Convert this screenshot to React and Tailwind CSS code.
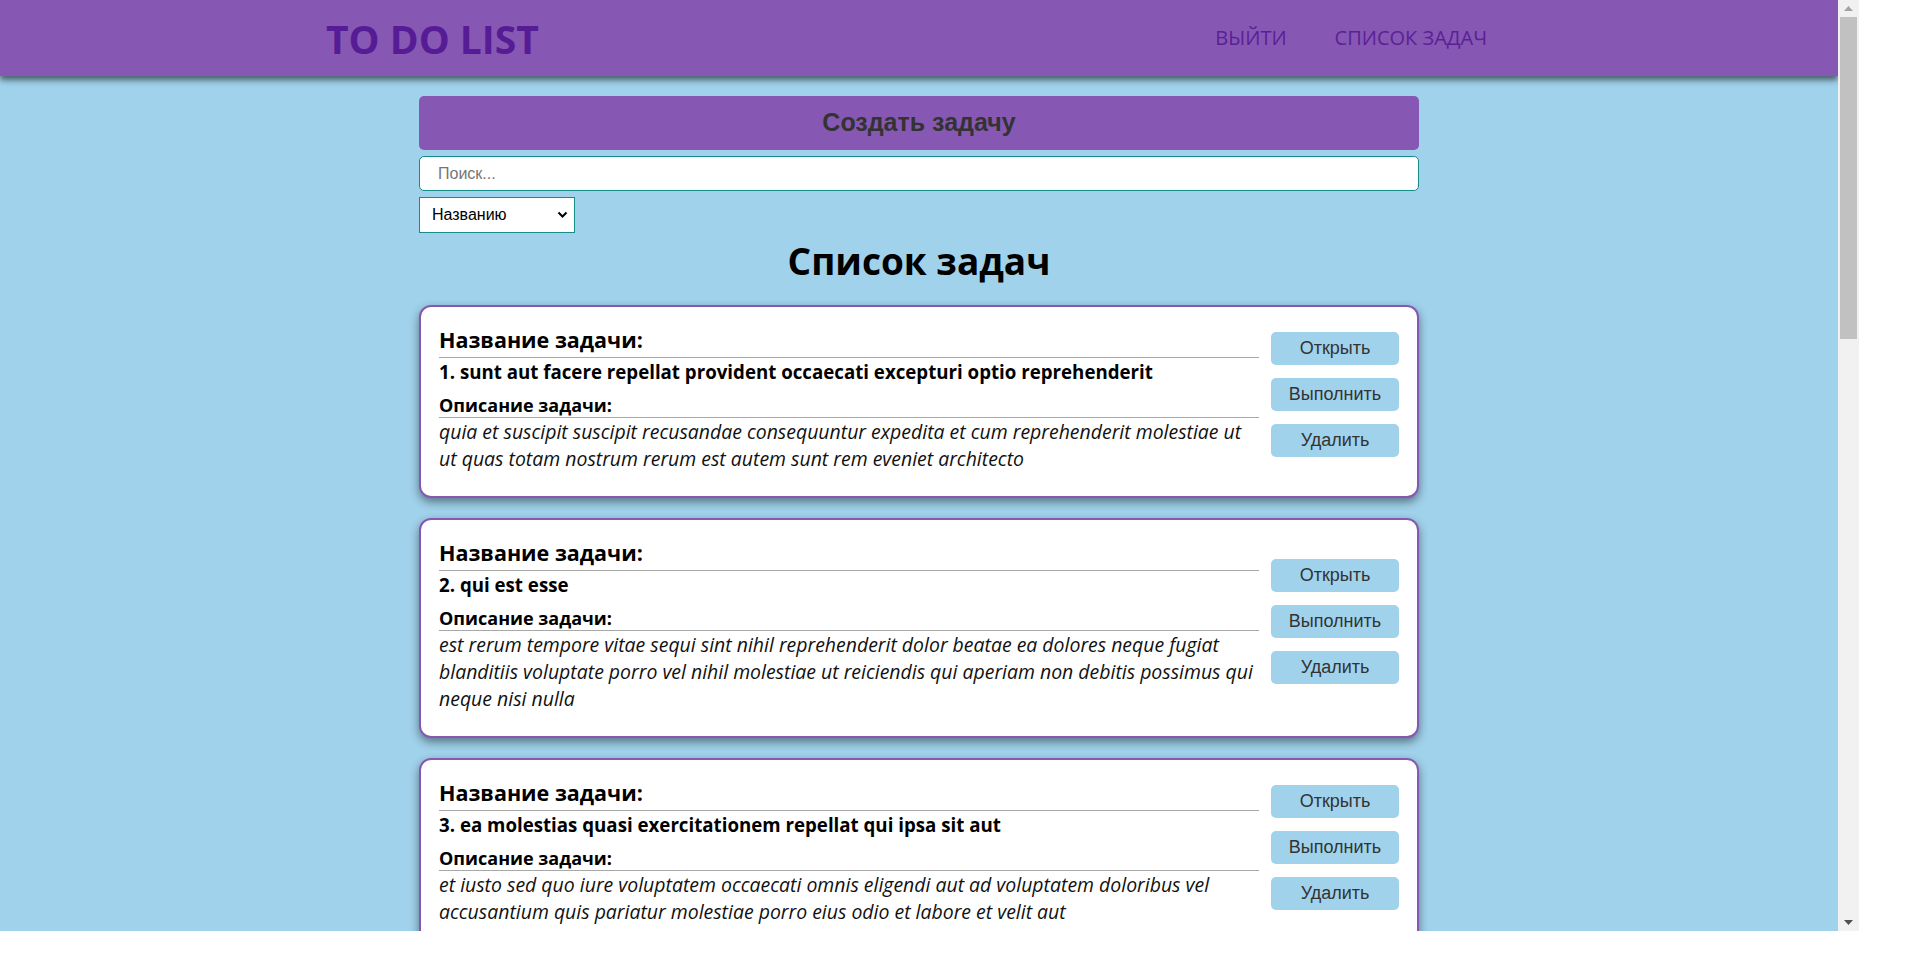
import React from 'react';

const tasks = [
  {
    id: 1,
    title: 'sunt aut facere repellat provident occaecati excepturi optio reprehenderit',
    body: 'quia et suscipit suscipit recusandae consequuntur expedita et cum reprehenderit molestiae ut ut quas totam nostrum rerum est autem sunt rem eveniet architecto',
  },
  {
    id: 2,
    title: 'qui est esse',
    body: 'est rerum tempore vitae sequi sint nihil reprehenderit dolor beatae ea dolores neque fugiat blanditiis voluptate porro vel nihil molestiae ut reiciendis qui aperiam non debitis possimus qui neque nisi nulla',
  },
  {
    id: 3,
    title: 'ea molestias quasi exercitationem repellat qui ipsa sit aut',
    body: 'et iusto sed quo iure voluptatem occaecati omnis eligendi aut ad voluptatem doloribus vel accusantium quis pariatur molestiae porro eius odio et labore et velit aut',
  },
];

const sans = "font-['Open_Sans',sans-serif]";
const arial = "font-['Liberation_Sans',Arial,sans-serif]";

function Header() {
  return (
    <header className="h-[76px] bg-[#8658b3] shadow-[0_4px_6px_rgba(0,0,0,0.55)] relative z-10">
      <div className={`w-[1200px] mx-auto h-full flex items-center justify-between pl-[7px] pr-[32px] ${sans}`}>
        <div className="text-[39px] font-bold text-[#561c95] leading-none">TO DO LIST</div>
        <nav className="flex gap-[48px] text-[20px] text-[#5a2196]">
          <a href="#">ВЫЙТИ</a>
          <a href="#">СПИСОК ЗАДАЧ</a>
        </nav>
      </div>
    </header>
  );
}

function TaskCard({ task }) {
  return (
    <div className="mb-[20px] bg-white border-2 border-[#8658b3] rounded-[12px] shadow-[0_4px_10px_rgba(0,0,0,0.45)] pt-[18px] pb-[24px] px-[18px] flex items-center gap-[12px]">
      <div className={`flex-1 min-w-0 text-black ${sans}`}>
        <h3 className="text-[21.5px] font-bold leading-[30px] pb-[2px] border-b border-[#a8a8a8]">Название задачи:</h3>
        <p className="text-[18.7px] font-bold leading-[24px] mt-[2px]">{task.id}. {task.title}</p>
        <h4 className="text-[18px] font-bold leading-[24px] mt-[9px] border-b border-[#a8a8a8]">Описание задачи:</h4>
        <p className="text-[19.45px] italic leading-[27px] text-[#111]">{task.body}</p>
      </div>
      <div className={`w-[128px] mt-[5px] flex flex-col ${arial}`}>
        {['Открыть', 'Выполнить', 'Удалить'].map((label) => (
          <button key={label} className="h-[33px] mb-[13px] rounded-[5px] bg-[#a0d2eb] text-[18px] text-[#333]">
            {label}
          </button>
        ))}
      </div>
    </div>
  );
}

function Scrollbar() {
  return (
    <div className="w-[21px] h-full bg-[#f1f1f1] flex flex-col items-center">
      <div className="h-[17px] w-full flex items-center justify-center">
        <svg width="9" height="5" viewBox="0 0 9 5"><path d="M4.5 0L9 5H0z" fill="#a3a3a3" /></svg>
      </div>
      <div className="w-[17px] h-[322px] bg-[#c1c1c1]" />
      <div className="flex-1" />
      <div className="h-[17px] w-full flex items-center justify-center">
        <svg width="9" height="5" viewBox="0 0 9 5"><path d="M0 0H9L4.5 5z" fill="#505050" /></svg>
      </div>
    </div>
  );
}

export default function App() {
  return (
    <div className="w-[1914px] h-[960px] bg-white overflow-hidden">
      <div className="flex h-[931px]">
        <div className="w-[1838px] h-full overflow-hidden bg-[#a0d2eb]">
          <Header />
          <main className="w-[1000px] mx-auto pt-[20px]">
            <button className={`w-full h-[54px] rounded-[5px] bg-[#8658b3] text-[25px] font-bold text-[#333] ${arial}`}>
              Создать задачу
            </button>
            <input
              type="text"
              placeholder="Поиск..."
              className={`mt-[6px] w-full h-[35px] rounded-[5px] border border-[#148c8c] bg-white px-[18px] text-[16px] placeholder-[#757575] outline-none ${arial}`}
            />
            <div className="mt-[6px] relative w-[156px] h-[36px]">
              <select className={`appearance-none w-full h-full border border-[#148c8c] bg-white pl-[12px] text-[16px] text-black outline-none ${arial}`}>
                <option>Названию</option>
                <option>Описанию</option>
              </select>
              <svg className="absolute right-[7px] top-[14px] pointer-events-none" width="11" height="8" viewBox="0 0 11 8">
                <path d="M1.5 1.5L5.5 5.5L9.5 1.5" stroke="#000" strokeWidth="2" fill="none" />
              </svg>
            </div>
            <h1 className={`mt-[1px] mb-[17px] text-center text-[37px] font-bold leading-[54px] text-black ${sans}`}>Список задач</h1>
            {tasks.map((t) => (
              <TaskCard key={t.id} task={t} />
            ))}
          </main>
        </div>
        <Scrollbar />
      </div>
    </div>
  );
}
